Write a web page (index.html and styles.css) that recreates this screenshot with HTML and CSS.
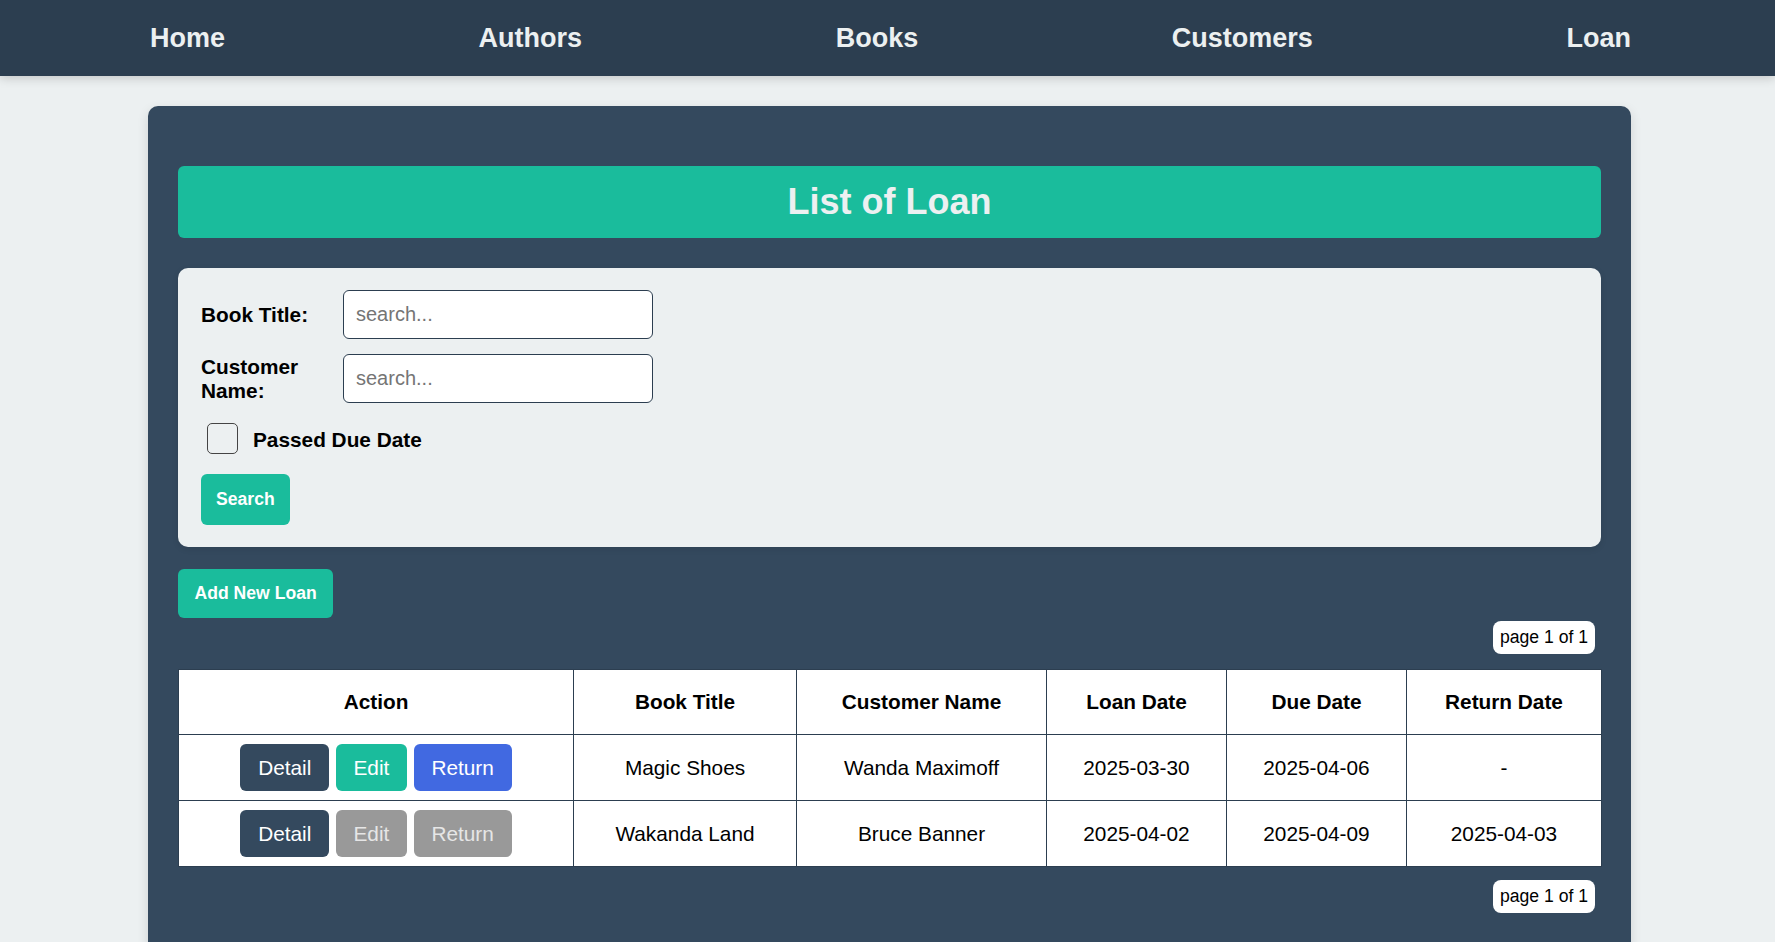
FILE: index.html
```html
<!DOCTYPE html>
<html lang="en">
<head>
<meta charset="utf-8">
<title>List of Loan</title>
<link rel="stylesheet" href="styles.css">
</head>
<body>
<nav class="navbar">
  <a href="#" class="nav-link">Home</a>
  <a href="#" class="nav-link">Authors</a>
  <a href="#" class="nav-link">Books</a>
  <a href="#" class="nav-link">Customers</a>
  <a href="#" class="nav-link">Loan</a>
</nav>

<main class="container">
  <h1 class="page-title">List of Loan</h1>

  <form class="search-box">
    <div class="field">
      <label class="field-label" for="bt">Book Title:</label>
      <input class="field-input" id="bt" type="text" placeholder="search...">
    </div>
    <div class="field">
      <label class="field-label" for="cn">Customer Name:</label>
      <input class="field-input" id="cn" type="text" placeholder="search...">
    </div>
    <label class="check-row">
      <input type="checkbox" class="check-box">
      <span class="check-text">Passed Due Date</span>
    </label>
    <div class="search-actions">
      <button type="button" class="btn-green">Search</button>
    </div>
  </form>

  <div class="add-row">
    <button type="button" class="btn-green">Add New Loan</button>
  </div>

  <div class="pager pager-top"><span class="page-pill">page 1 of 1</span></div>

  <table class="loan-table">
    <colgroup>
      <col class="c-action"><col class="c-title"><col class="c-cust"><col class="c-date"><col class="c-date"><col class="c-ret">
    </colgroup>
    <thead>
      <tr>
        <th>Action</th>
        <th>Book Title</th>
        <th>Customer Name</th>
        <th>Loan Date</th>
        <th>Due Date</th>
        <th>Return Date</th>
      </tr>
    </thead>
    <tbody>
      <tr>
        <td><div class="actions"><span class="btn btn-detail">Detail</span><span class="btn btn-edit">Edit</span><span class="btn btn-return">Return</span></div></td>
        <td>Magic Shoes</td>
        <td>Wanda Maximoff</td>
        <td>2025-03-30</td>
        <td>2025-04-06</td>
        <td>-</td>
      </tr>
      <tr>
        <td><div class="actions"><span class="btn btn-detail">Detail</span><span class="btn btn-off">Edit</span><span class="btn btn-off">Return</span></div></td>
        <td>Wakanda Land</td>
        <td>Bruce Banner</td>
        <td>2025-04-02</td>
        <td>2025-04-09</td>
        <td>2025-04-03</td>
      </tr>
    </tbody>
  </table>

  <div class="pager pager-bottom"><span class="page-pill">page 1 of 1</span></div>
</main>
</body>
</html>
```

FILE: styles.css
```css
* { box-sizing: border-box; }

body {
  margin: 0;
  background: #ecf0f1;
  font-family: "Liberation Sans", Arial, sans-serif;
  color: #000;
}

.navbar {
  position: relative;
  z-index: 2;
  height: 76px;
  background: #2c3e50;
  display: flex;
  align-items: center;
  justify-content: space-between;
  padding: 0 144px 0 150px;
  box-shadow: 0 2px 10px rgba(0, 0, 0, 0.18);
}

.nav-link {
  color: #ecf0f1;
  text-decoration: none;
  font-weight: bold;
  font-size: 27px;
}

.container {
  margin: 30px 144px 0 148px;
  background: #34495e;
  border-radius: 10px;
  padding: 30px 30px 40px;
  box-shadow: 0 4px 12px rgba(0, 0, 0, 0.12);
}

.page-title {
  margin: 30px 0 30px;
  background: #1abc9c;
  color: #ecf0f1;
  border-radius: 6px;
  text-align: center;
  font-size: 36px;
  line-height: 42px;
  padding: 15px 0;
}

.search-box {
  background: #ecf0f1;
  border-radius: 10px;
  padding: 22px 23px;
  box-shadow: 0 2px 6px rgba(0, 0, 0, 0.1);
  display: flex;
  flex-direction: column;
}

.field {
  display: flex;
  align-items: center;
}
.field + .field { margin-top: 15px; }

.field-label {
  width: 130px;
  margin-right: 12px;
  font-weight: bold;
  font-size: 20.8px;
  line-height: 23.5px;
}

.field-input {
  width: 310px;
  height: 49px;
  border: 1px solid #2c3e50;
  border-radius: 6px;
  background: #fff;
  padding: 0 12px;
  font-family: "Liberation Sans", Arial, sans-serif;
  font-size: 20px;
  color: #000;
}
.field-input::placeholder { color: #757575; }

.check-row {
  margin-top: 20px;
  display: flex;
  align-items: center;
}

.check-box {
  appearance: none;
  -webkit-appearance: none;
  width: 31px;
  height: 31px;
  margin: 0 15px 0 6px;
  border: 1px solid #444;
  border-radius: 5px;
  background: transparent;
}

.check-text {
  font-weight: bold;
  font-size: 20.8px;
  line-height: 26px;
  padding-top: 2px;
}

.search-actions { margin-top: 20px; display: flex; }

.btn-green {
  background: #1abc9c;
  color: #fff;
  border: none;
  border-radius: 6px;
  font-family: "Liberation Sans", Arial, sans-serif;
  font-weight: bold;
  font-size: 17.6px;
  line-height: 21px;
  padding: 15px 15px;
}

.add-row { margin-top: 22px; display: flex; }
.add-row .btn-green { padding: 14px 16.5px; }

.pager {
  display: flex;
  justify-content: flex-end;
  padding-right: 6px;
}
.pager-top { margin-top: 3px; }
.pager-bottom { margin-top: 13px; }

.page-pill {
  background: #fff;
  border-radius: 8px;
  font-size: 17.6px;
  line-height: 21px;
  padding: 6px 7px;
}

.loan-table {
  margin-top: 15px;
  width: 100%;
  border-collapse: collapse;
  table-layout: fixed;
  background: #fff;
  font-size: 20.8px;
}

.c-action { width: 395px; }
.c-title { width: 223px; }
.c-cust { width: 250px; }
.c-date { width: 180px; }
.c-ret { width: 195px; }

.loan-table th,
.loan-table td {
  border: 1px solid #2c3e50;
  text-align: center;
  line-height: 24px;
}

.loan-table th {
  padding: 20px 8px;
  font-weight: bold;
}

.loan-table td {
  padding: 9px 8px;
}

.actions {
  display: flex;
  justify-content: center;
  gap: 6.5px;
}

.btn {
  display: inline-block;
  border-radius: 6px;
  color: #fff;
  padding: 11.5px 17.8px;
  line-height: 24px;
}
.btn-detail { background: #34495e; }
.btn-edit { background: #1abc9c; }
.btn-return { background: #4169e1; }
.btn-off { background: #999; color: #e6e6e6; }
```
